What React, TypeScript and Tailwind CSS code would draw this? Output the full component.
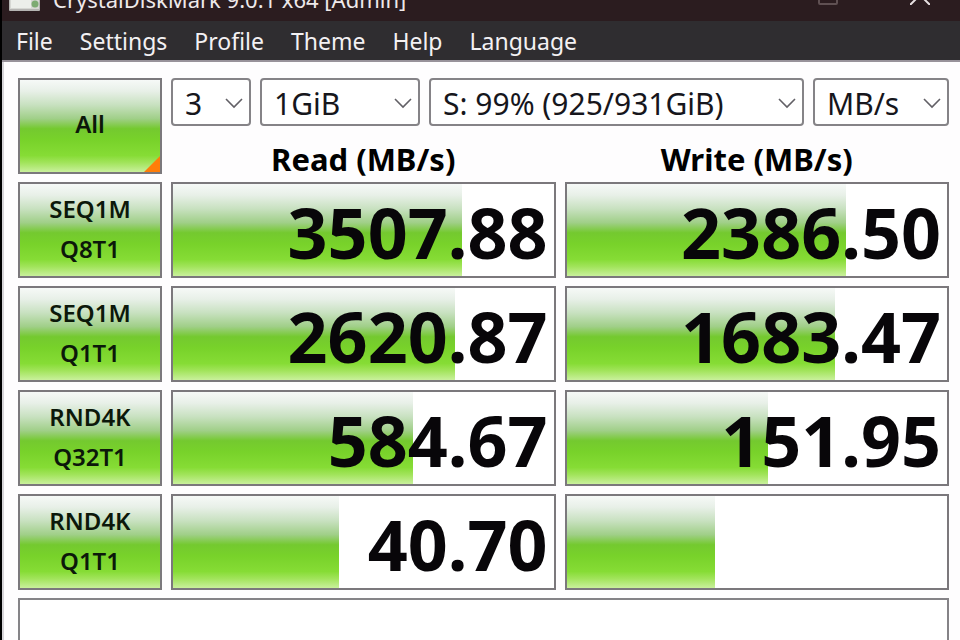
const menus = ["File", "Settings", "Profile", "Theme", "Help", "Language"];

const tests = [
	{
		name: "SEQ1M",
		queue: "Q8T1",
		read: { value: "3507.88", fill: 76 },
		write: { value: "2386.50", fill: 73.5 },
	},
	{
		name: "SEQ1M",
		queue: "Q1T1",
		read: { value: "2620.87", fill: 74 },
		write: { value: "1683.47", fill: 70.5 },
	},
	{
		name: "RND4K",
		queue: "Q32T1",
		read: { value: "584.67", fill: 63 },
		write: { value: "151.95", fill: 53 },
	},
	{
		name: "RND4K",
		queue: "Q1T1",
		read: { value: "40.70", fill: 43.5 },
		write: { value: "", fill: 39 },
	},
];

const glossy =
	"bg-[linear-gradient(to_bottom,#f6f9f7_0%,#e8f0e8_12%,#c8e1c0_27%,#a0cf88_42%,#74c92f_53%,#78d22a_65%,#86dc35_82%,#a2e45c_90%,#c9f09c_100%)]";

function DiskIcon() {
	return (
		<svg width="32" height="32" viewBox="0 0 32 32" aria-hidden="true">
			<rect x="0" y="0" width="31" height="32" rx="1" fill="#b5b4b2" />
			<rect x="1" y="0" width="29" height="30" fill="#d6d7d3" />
			<rect x="2" y="0" width="20" height="29" fill="#eceeea" />
			<circle cx="26" cy="25" r="3.5" fill="#7dab72" />
		</svg>
	);
}

function Picker({ label, options, className }: { label: string; options: string[]; className: string }) {
	return (
		<div className={`relative ${className}`}>
			<select
				aria-label={label}
				className="block h-12 w-full appearance-none rounded-[4px] border-2 border-[#858387] bg-white pt-1 pl-3 text-[30px] leading-10 text-[#16161c]">
				{options.map((option) => (
					<option key={option}>{option}</option>
				))}
			</select>
			<svg
				className="pointer-events-none absolute top-5 right-2 h-3 w-[18px]"
				viewBox="0 0 18 12"
				fill="none"
				stroke="#626066"
				strokeWidth="1.6">
				<path d="M1 1L9 9L17 1" />
			</svg>
		</div>
	);
}

function Meter({ value, fill }: { value: string; fill: number }) {
	return (
		<td className="relative h-24 border-2 border-[#7b787c] bg-white p-0 align-middle">
			<div className={`absolute inset-y-0 left-0 ${glossy}`} style={{ width: `${fill}%` }} />
			<div className="relative pt-1 pr-1.5 text-right text-[70px] leading-[70px] font-bold text-[#080609]">
				{value}
			</div>
		</td>
	);
}

export default function App() {
	return (
		<div className="h-screen overflow-hidden border-l-2 border-black bg-[#fefdfe] font-['Noto_Sans','Open_Sans',sans-serif] text-black">
			<header className="flex h-[21px] items-end overflow-hidden bg-[#2b1c1f] pr-[30px] pl-[7px] text-[#efe9ea]">
				<div className="pb-[10px]">
					<DiskIcon />
				</div>
				<h1 className="ml-3 flex-1 text-[22px] leading-[44px]">CrystalDiskMark 9.0.1 x64 [Admin]</h1>
				<button aria-label="Maximize" className="mr-[72px] pb-4">
					<svg width="20" height="20" fill="none" stroke="#5f5052" strokeWidth="2">
						<rect x="1" y="1" width="18" height="18" rx="1" />
					</svg>
				</button>
				<button aria-label="Close" className="pb-4">
					<svg width="20" height="20" stroke="#e6dfe0" strokeWidth="2">
						<path d="M0 0L20 20M20 0L0 20" />
					</svg>
				</button>
			</header>
			<nav className="flex h-[41px] items-center gap-[27px] border-b-2 border-[#98929a] bg-[#2f2d30] px-3.5 text-[23px] leading-10 text-[#f3f1f3]">
				{menus.map((menu) => (
					<button key={menu}>{menu}</button>
				))}
			</nav>

			<main className="border-l-2 border-[#d6d4d8] pt-2 pr-0.5 pl-[5px]">
				<table className="w-full table-fixed border-separate border-spacing-x-[9px] border-spacing-y-[8px]">
					<colgroup>
						<col className="w-36" />
						<col />
						<col />
					</colgroup>
					<thead>
						<tr>
							<td rowSpan={2} className="p-0">
								<button
									className={`relative block h-24 w-full border-2 border-[#7b787c] pb-1 text-[24px] font-semibold text-[#0c180a] ${glossy}`}>
									All
									<span className="absolute right-0 bottom-0 size-4 bg-[#ff7d08] [clip-path:polygon(100%_0,100%_100%,0_100%)]" />
								</button>
							</td>
							<td colSpan={2} className="p-0">
								<div className="flex gap-[9px]">
									<Picker label="Test count" options={["3"]} className="w-20" />
									<Picker label="Test size" options={["1GiB"]} className="w-40" />
									<Picker label="Drive" options={["S: 99% (925/931GiB)"]} className="flex-1" />
									<Picker label="Unit" options={["MB/s"]} className="w-[136px]" />
								</div>
							</td>
						</tr>
						<tr className="text-[31px] leading-[30px] font-bold">
							<th scope="col" className="h-10 p-0 pt-2.5">Read (MB/s)</th>
							<th scope="col" className="h-10 p-0 pt-2.5">Write (MB/s)</th>
						</tr>
					</thead>
					<tbody>
						{tests.map((test) => (
							<tr key={`${test.name}-${test.queue}`}>
								<th scope="row" className="p-0">
									<button
										className={`block h-24 w-full border-2 border-[#7b787c] pb-0.5 text-[24px] leading-10 font-semibold text-[#0c180a] ${glossy}`}>
										{test.name}
										<br />
										{test.queue}
									</button>
								</th>
								<Meter {...test.read} />
								<Meter {...test.write} />
							</tr>
						))}
					</tbody>
				</table>
				<div className="px-[9px]">
					<input
						aria-label="Comment"
						className="block h-12 w-full border-2 border-[#858387] bg-white px-3 text-[24px]"
					/>
				</div>
			</main>
		</div>
	);
}
